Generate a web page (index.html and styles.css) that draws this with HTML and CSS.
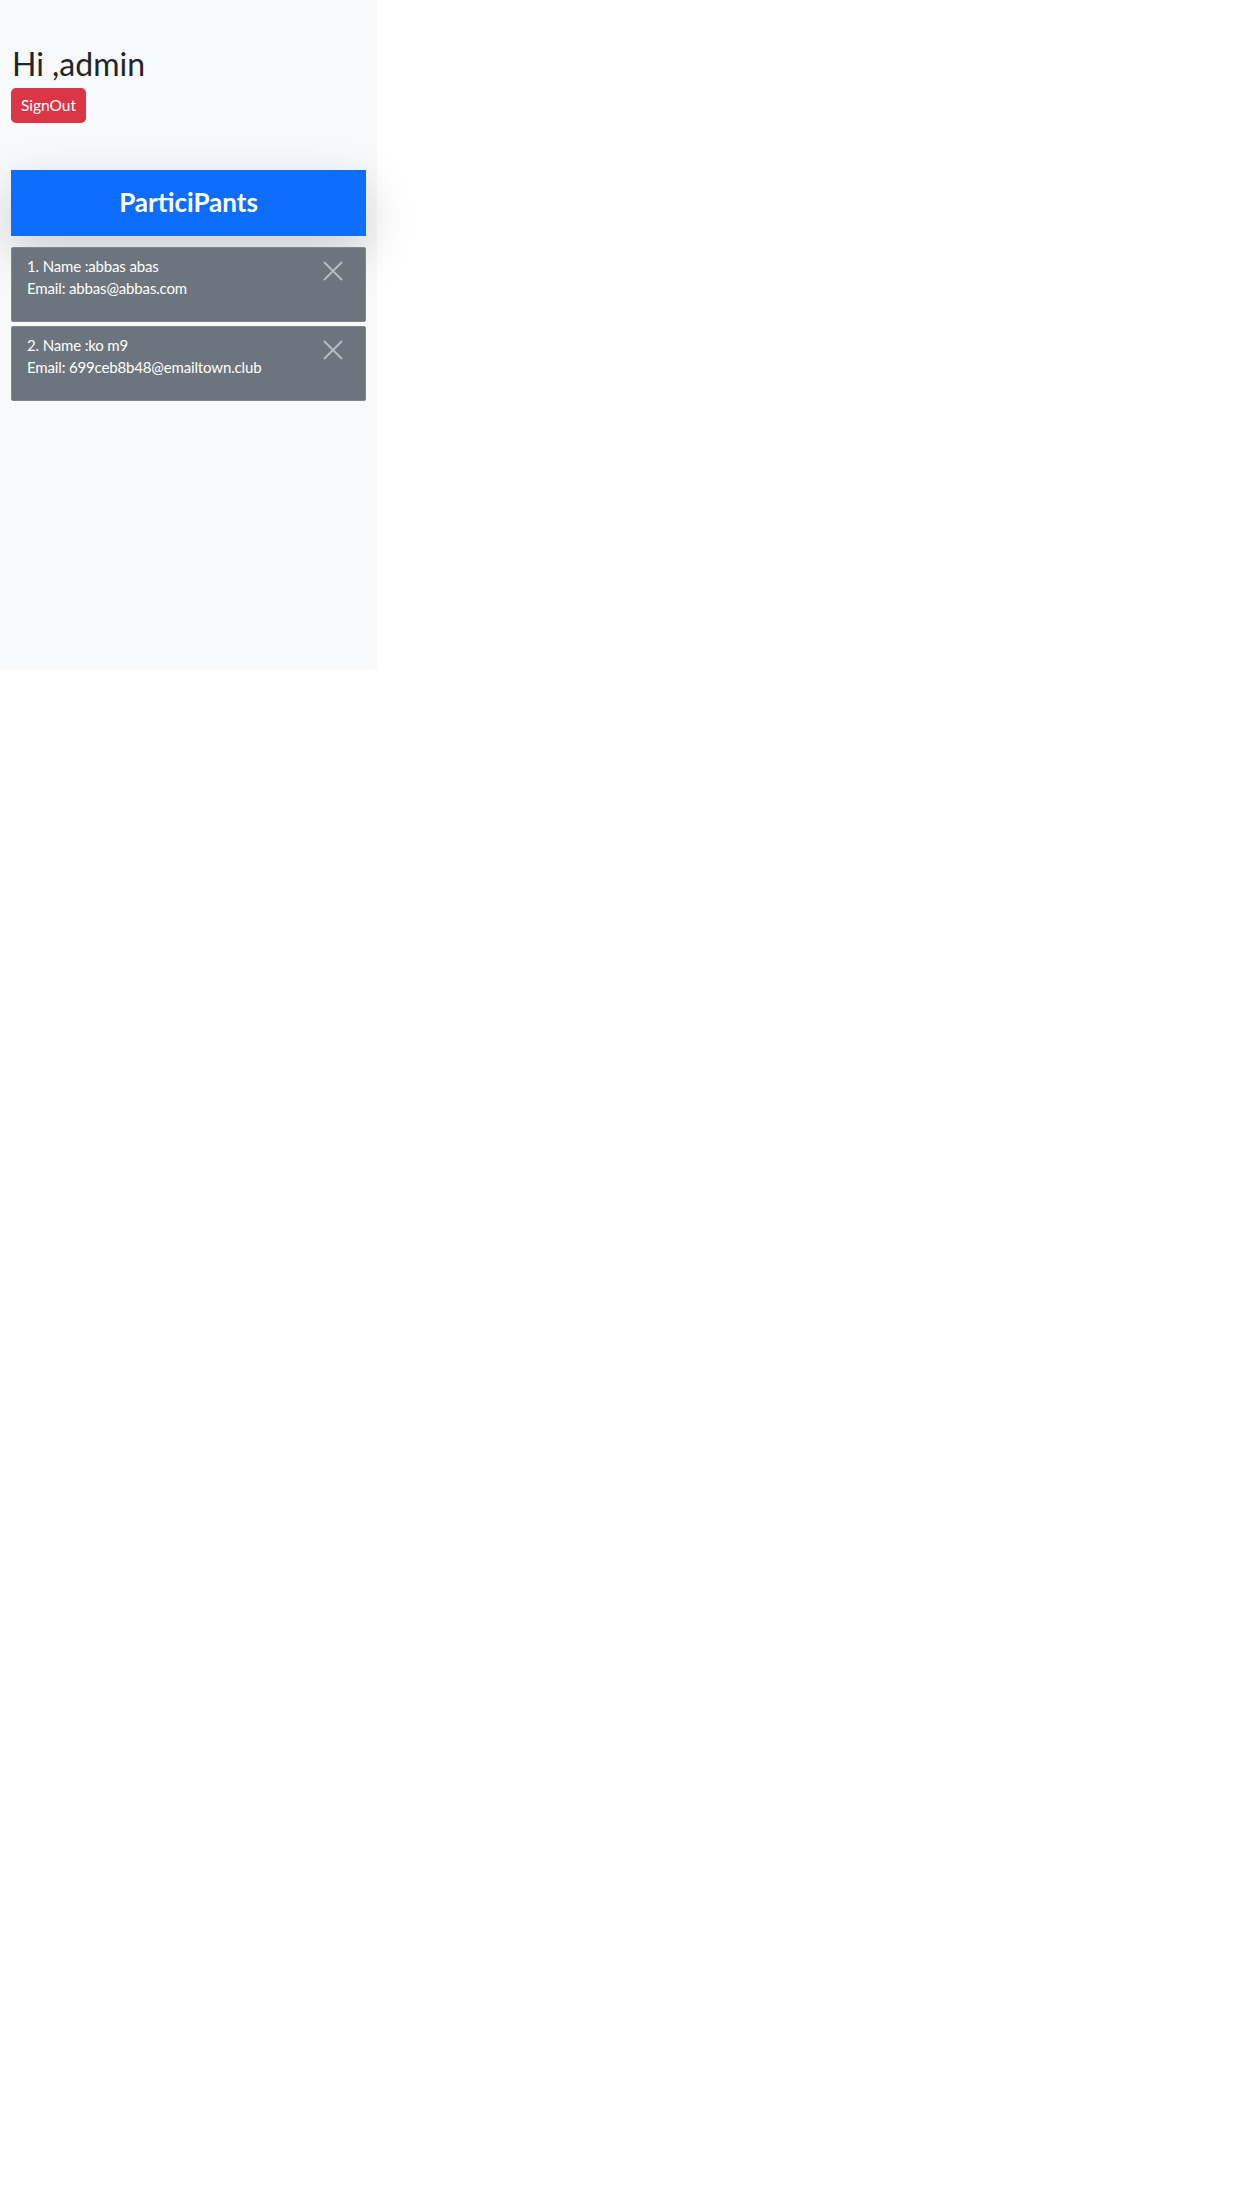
FILE: index.html
```html
<!DOCTYPE html>
<html lang="en">
<head>
<meta charset="utf-8">
<title>Participants</title>
<link rel="stylesheet" href="styles.css">
</head>
<body>
<main class="panel">
  <h1 class="greeting">Hi ,admin</h1>
  <button class="btn-signout" type="button">SignOut</button>
  <section class="participants">
    <h2 class="participants-title">ParticiPants</h2>
    <ul class="participant-list">
      <li class="participant-card">
        <div class="participant-info">
          <div>1. Name :abbas abas</div>
          <div>Email: abbas@abbas.com</div>
        </div>
        <button class="btn-close" type="button" aria-label="Close">
          <svg viewBox="0 0 20 20" width="20" height="20"><path d="M1 1 L19 19 M19 1 L1 19" stroke="currentColor" stroke-width="1.8" fill="none"/></svg>
        </button>
      </li>
      <li class="participant-card">
        <div class="participant-info">
          <div>2. Name :ko m9</div>
          <div>Email: 699ceb8b48@emailtown.club</div>
        </div>
        <button class="btn-close" type="button" aria-label="Close">
          <svg viewBox="0 0 20 20" width="20" height="20"><path d="M1 1 L19 19 M19 1 L1 19" stroke="currentColor" stroke-width="1.8" fill="none"/></svg>
        </button>
      </li>
    </ul>
  </section>
</main>
</body>
</html>
```

FILE: styles.css
```css
* { box-sizing: border-box; }

html, body {
  margin: 0;
  padding: 0;
  background: #ffffff;
}

body {
  font-family: Lato, "Noto Sans", sans-serif;
  color: #212529;
}

.panel {
  width: 377px;
  height: 669px;
  background: #f8f9fa;
  padding: 42px 11px 0 11px;
  display: flex;
  flex-direction: column;
  align-items: flex-start;
}

.greeting {
  margin: 0;
  font-weight: 400;
  font-size: 32px;
  line-height: 44px;
  color: #212529;
  padding-left: 1px;
}

.btn-signout {
  margin-top: 2px;
  width: 75px;
  height: 35px;
  border: none;
  border-radius: 5px;
  background: #dc3545;
  color: #ffffff;
  font-family: Lato, "Noto Sans", sans-serif;
  font-size: 15.5px;
  padding: 0;
  line-height: 35px;
}

.participants {
  margin-top: 47px;
  width: 100%;
}

.participants-title {
  margin: 0;
  height: 66px;
  background: #0d6efd;
  color: #ffffff;
  font-size: 26px;
  font-weight: 700;
  text-align: center;
  line-height: 64px;
  box-shadow: 0 16px 48px rgba(0, 0, 0, 0.175);
}

.participant-list {
  list-style: none;
  margin: 11px 0 0 0;
  padding: 0;
  display: flex;
  flex-direction: column;
  gap: 4px;
}

.participant-card {
  display: flex;
  justify-content: space-between;
  align-items: flex-start;
  background: #6c757d;
  border: 1px solid #80868c;
  border-radius: 2px;
  padding: 7px 22px 22px 15px;
  color: #ffffff;
  font-size: 15px;
  letter-spacing: -0.15px;
  line-height: 22px;
}

.btn-close {
  margin-top: 6px;
  padding: 0;
  border: none;
  background: transparent;
  color: #b9bdc1;
  width: 20px;
  height: 20px;
  display: block;
}

.btn-close svg { display: block; }
```
